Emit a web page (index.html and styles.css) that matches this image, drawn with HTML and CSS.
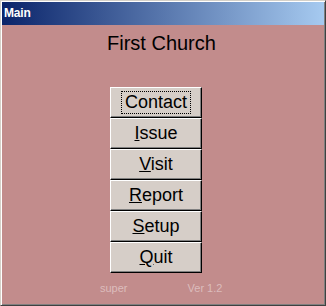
FILE: index.html
```html
<!DOCTYPE html>
<html lang="en">
<head>
  <meta charset="UTF-8" />
  <title>Main</title>
  <link rel="stylesheet" href="styles.css">
</head>
<body>
  <div class="window">
    <div class="titlebar">Main</div>
    <div class="main">
      <h1 class="church">First Church</h1>
      <div class="menu">
        <button type="button" class="menu-btn"><span class="focus">Contact</span></button>
        <button type="button" class="menu-btn"><u>I</u>ssue</button>
        <button type="button" class="menu-btn"><u>V</u>isit</button>
        <button type="button" class="menu-btn"><u>R</u>eport</button>
        <button type="button" class="menu-btn"><u>S</u>etup</button>
        <button type="button" class="menu-btn"><u>Q</u>uit</button>
      </div>
      <div class="footer">
        <span>super</span>
        <span>Ver 1.2</span>
      </div>
    </div>
  </div>
</body>
</html>
```

FILE: styles.css
```css
    body {
      margin: 0;
      font-family: "Liberation Sans", Arial, sans-serif;
      background: #c28c8c;
    }
    .window {
      width: 326px;
      height: 306px;
      box-sizing: border-box;
      border: 1px solid;
      border-color: #d4d0c8 #404040 #404040 #d4d0c8;
      box-shadow: inset 1px 1px #ffffff, inset -1px -1px #808080;
      padding: 1px;
      background: #c28c8c;
      display: flex;
      flex-direction: column;
    }
    .titlebar {
      height: 23px;
      line-height: 22px;
      padding-left: 2px;
      color: #ffffff;
      font-weight: bold;
      font-size: 12px;
      letter-spacing: -0.2px;
      background: linear-gradient(to right, #0a246a, #a6caf0);
    }
    .main {
      flex: 1;
      display: flex;
      flex-direction: column;
      align-items: flex-start;
    }
    .church {
      margin: 7px 0 0 105px;
      font-size: 20px;
      font-weight: normal;
      line-height: 23px;
      color: #000000;
    }
    .menu {
      margin: 32px 0 0 108px;
      display: flex;
      flex-direction: column;
    }
    .menu-btn {
      width: 92px;
      height: 31px;
      padding: 0;
      border: 1px solid;
      border-color: #ffffff #000000 #000000 #ffffff;
      box-shadow: inset -1px -1px #808080;
      background: #d6cec8;
      font-family: "Liberation Sans", Arial, sans-serif;
      font-size: 18px;
      color: #000000;
      line-height: 21px;
    }
    .focus {
      display: inline-block;
      padding: 0 3px;
      border: 1px dotted #000000;
    }
    .footer {
      margin: 9px 0 0 98px;
      display: flex;
      gap: 60px;
      font-size: 11px;
      line-height: 13px;
      color: #dcbcbc;
    }
```
